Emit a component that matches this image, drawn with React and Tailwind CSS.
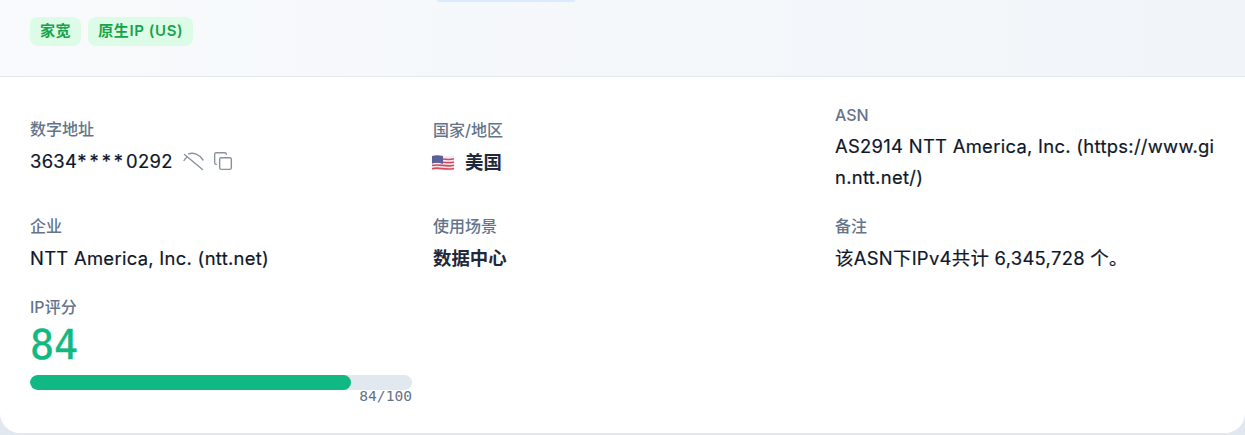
import React from 'react'
import { Copy } from 'lucide-react'

const sans = "font-['Inter','Noto_Sans_CJK_SC',sans-serif]"
const mono = "font-['DejaVu_Sans_Mono',monospace]"

function Label({ children }) {
  return <div className="text-[16px] leading-[20px] font-medium text-[#64748b]">{children}</div>
}

function EyeOff() {
  return (
    <svg width="21" height="20" viewBox="0 0 21 20" fill="none" stroke="#8a929c" strokeWidth="1.4" strokeLinecap="round">
      <path d="M1.5 3.5 L19.5 18.5" />
      <path d="M5.5 2.8 C10.5 1 16.5 3.5 20 9" />
      <path d="M1 9.5 C1.8 8.2 2.8 7 4 6" />
    </svg>
  )
}

function Flag() {
  return (
    <svg width="24" height="20" viewBox="0 0 24 20" className="-ml-[2px] mt-[1px]">
      <path d="M1 3 C8 0.5 15 5 23 2.5 V17 C15 19.5 8 15 1 17.5 Z" fill="#f0eef2" />
      <path d="M1 6.2 C8 3.8 15 8.2 23 5.8 M1 9.4 C8 7 15 11.4 23 9 M1 12.6 C8 10.2 15 14.6 23 12.2 M1 15.8 C8 13.4 15 17.8 23 15.4" fill="none" stroke="#d8475c" strokeWidth="1.6" />
      <path d="M1 3 C4 2 8 2 12 3 V11 C8 9.5 4 9.5 1 10.5 Z" fill="#5a6199" />
    </svg>
  )
}

function Tag({ children }) {
  return (
    <span className="h-[29px] px-[10px] flex items-center rounded-[8px] bg-[#dcfce7] text-[#16a34a] text-[15px] font-semibold tracking-[0.6px]">
      {children}
    </span>
  )
}

export default function App() {
  const value = 'text-[18.4px] tracking-[0.3px] font-normal text-[#0f172a] [-webkit-text-stroke:0.2px_#0f172a]'
  return (
    <div className={`${sans} w-[1245px] h-[435px] bg-[#e2e8f0] text-[#1e293b]`}>
      <div className="h-[433px] bg-white rounded-b-[20px] overflow-hidden flex flex-col">
        <div className="h-[77px] shrink-0 border-b border-[#e2e8f0] bg-gradient-to-r from-[#f8fafc] to-[#f1f5f9] relative px-[30px] pt-[17px]">
          <div className="absolute left-[437px] top-0 w-[138px] h-[2px] bg-[#dbeafe] rounded-b-[4px]" />
          <div className="flex gap-[7px]">
            <Tag>家宽</Tag>
            <Tag>原生IP (US)</Tag>
          </div>
        </div>

        <div className="px-[30px] pt-[24px] grid grid-cols-[382px_381px_380px] gap-x-[21px]">
          <div className="h-[94px] flex flex-col justify-center">
            <Label>数字地址</Label>
            <div className={`mt-[6px] flex items-center h-[32px] leading-[32px] ${value}`}>
              <span>3634<span className="tracking-[3px]">****</span>0292</span>
              <span className="ml-[10px] flex"><EyeOff /></span>
              <Copy className="ml-[9px] w-[20px] h-[20px] text-[#8a929c]" strokeWidth={1.7} />
            </div>
          </div>
          <div className="h-[94px] flex flex-col justify-center pt-[2px]">
            <Label>国家/地区</Label>
            <div className="mt-[7px] flex items-center h-[32px] text-[18.4px] font-semibold">
              <Flag />
              <span className="ml-[10px]">美国</span>
            </div>
          </div>
          <div className="h-[94px] flex flex-col justify-center pt-[1px]">
            <Label>ASN</Label>
            <div className={`mt-[6px] break-all leading-[31px] ${value}`}>AS2914 NTT America, Inc. (https://www.gin.ntt.net/)</div>
          </div>

          <div className="mt-[21px] h-[64px]">
            <Label>企业</Label>
            <div className={`mt-[6px] leading-[32px] ${value}`}>NTT America, Inc. (ntt.net)</div>
          </div>
          <div className="mt-[21px] h-[64px]">
            <Label>使用场景</Label>
            <div className="mt-[6px] text-[18.4px] font-semibold leading-[32px]">数据中心</div>
          </div>
          <div className="mt-[21px] h-[64px]">
            <Label>备注</Label>
            <div className={`mt-[6px] leading-[32px] ${value}`}>该ASN下IPv4共计 6,345,728 个。</div>
          </div>

          <div className="mt-[17px]">
            <Label>IP评分</Label>
            <div className={`mt-[4px] ${mono} text-[40px] leading-[48px] font-normal text-[#10b981] [-webkit-text-stroke:0.5px_#10b981]`}>84</div>
            <div className="mt-[6px] h-[15px] rounded-full bg-[#e2e8f0] overflow-hidden">
              <div className="h-full w-[84%] rounded-full bg-[#10b981]" />
            </div>
            <div className={`text-right ${mono} text-[14.6px] leading-[12px] text-[#64748b]`}>84/100</div>
          </div>
        </div>
      </div>
    </div>
  )
}
